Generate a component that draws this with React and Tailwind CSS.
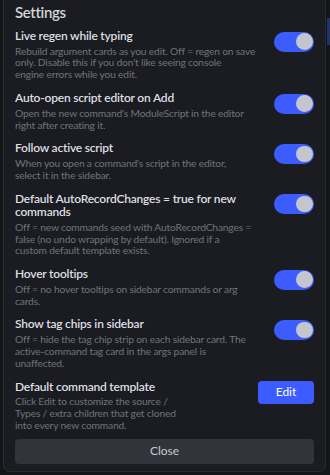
import { useState } from "react";

const settings = [
  {
    key: "liveRegen",
    title: ["Live regen while typing"],
    desc: [
      "Rebuild argument cards as you edit. Off = regen on save",
      "only. Disable this if you don't like seeing console",
      "engine errors while you edit.",
    ],
  },
  {
    key: "autoOpen",
    title: ["Auto-open script editor on Add"],
    desc: [
      "Open the new command's ModuleScript in the editor",
      "right after creating it.",
    ],
  },
  {
    key: "follow",
    title: ["Follow active script"],
    desc: [
      "When you open a command's script in the editor,",
      "select it in the sidebar.",
    ],
  },
  {
    key: "autoRecord",
    title: ["Default AutoRecordChanges = true for new", "commands"],
    desc: [
      "Off = new commands seed with AutoRecordChanges =",
      "false (no undo wrapping by default). Ignored if a",
      "custom default template exists.",
    ],
  },
  {
    key: "tooltips",
    title: ["Hover tooltips"],
    desc: ["Off = no hover tooltips on sidebar commands or arg", "cards."],
  },
  {
    key: "tagChips",
    title: ["Show tag chips in sidebar"],
    desc: [
      "Off = hide the tag chip strip on each sidebar card. The",
      "active-command tag card in the args panel is",
      "unaffected.",
    ],
  },
];

function Toggle({ on, onChange }) {
  return (
    <button
      type="button"
      onClick={onChange}
      className={
        "mt-[2.5px] flex h-[20px] w-[40px] shrink-0 items-center rounded-full px-[1.5px] " +
        (on ? "justify-end bg-[#3c5cff]" : "justify-start bg-[#3a3c44]")
      }
    >
      <span className="block h-[16.5px] w-[16.5px] rounded-full bg-[#c3c5cf]" />
    </button>
  );
}

function Lines({ lines }) {
  return lines.map((l, i) => (
    <span key={i} className="block whitespace-nowrap">
      {l}
    </span>
  ));
}

export default function App() {
  const [values, setValues] = useState({
    liveRegen: true,
    autoOpen: true,
    follow: true,
    autoRecord: true,
    tooltips: true,
    tagChips: true,
  });

  return (
    <div
      className="relative h-[475px] w-[330px] overflow-hidden bg-[#141519]"
      style={{ fontFamily: "Lato, 'Noto Sans', sans-serif" }}
    >
      <div className="absolute right-0 top-[18px] h-[27px] w-[3px] bg-[#1b3566]" />

      <div className="ml-[3px] mr-[4px] flex h-[472px] flex-col rounded-b-[7px] border border-t-0 border-[#2a2b31] bg-[#1b1c21] px-[11px] pt-[2px]">
        <h1 className="text-[15px] font-semibold leading-[20px] tracking-[-0.35px] text-[#d3d5da]">
          Settings
        </h1>

        <div className="mt-[7px] flex flex-col gap-[9.8px]">
          {settings.map((s) => (
            <div key={s.key} className="flex justify-between gap-3">
              <div className="min-w-0">
                <div className="text-[12px] font-semibold leading-[13.5px] tracking-[-0.2px] text-[#dedfe3]">
                  <Lines lines={s.title} />
                </div>
                <div className="mt-[3px] text-[10.25px] leading-[11.95px] tracking-[-0.18px] text-[#70737d]">
                  <Lines lines={s.desc} />
                </div>
              </div>
              <Toggle
                on={values[s.key]}
                onChange={() =>
                  setValues({ ...values, [s.key]: !values[s.key] })
                }
              />
            </div>
          ))}

          <div className="flex justify-between gap-3">
            <div className="min-w-0">
              <div className="text-[12px] font-semibold leading-[13.5px] tracking-[-0.2px] text-[#dedfe3]">
                Default command template
              </div>
              <div className="mt-[3px] text-[10.25px] leading-[11.95px] tracking-[-0.18px] text-[#70737d]">
                <Lines
                  lines={[
                    "Click Edit to customize the source /",
                    "Types / extra children that get cloned",
                    "into every new command.",
                  ]}
                />
              </div>
            </div>
            <button
              type="button"
              className="mt-[1px] h-[23px] w-[56px] shrink-0 rounded-[4px] bg-[#3c5cff] text-[12px] text-white"
            >
              Edit
            </button>
          </div>
        </div>

        <button
          type="button"
          className="mt-[7px] h-[25px] w-full rounded-[4px] bg-[#32343c] text-[12px] text-[#c9cad0]"
        >
          Close
        </button>
      </div>
    </div>
  );
}
